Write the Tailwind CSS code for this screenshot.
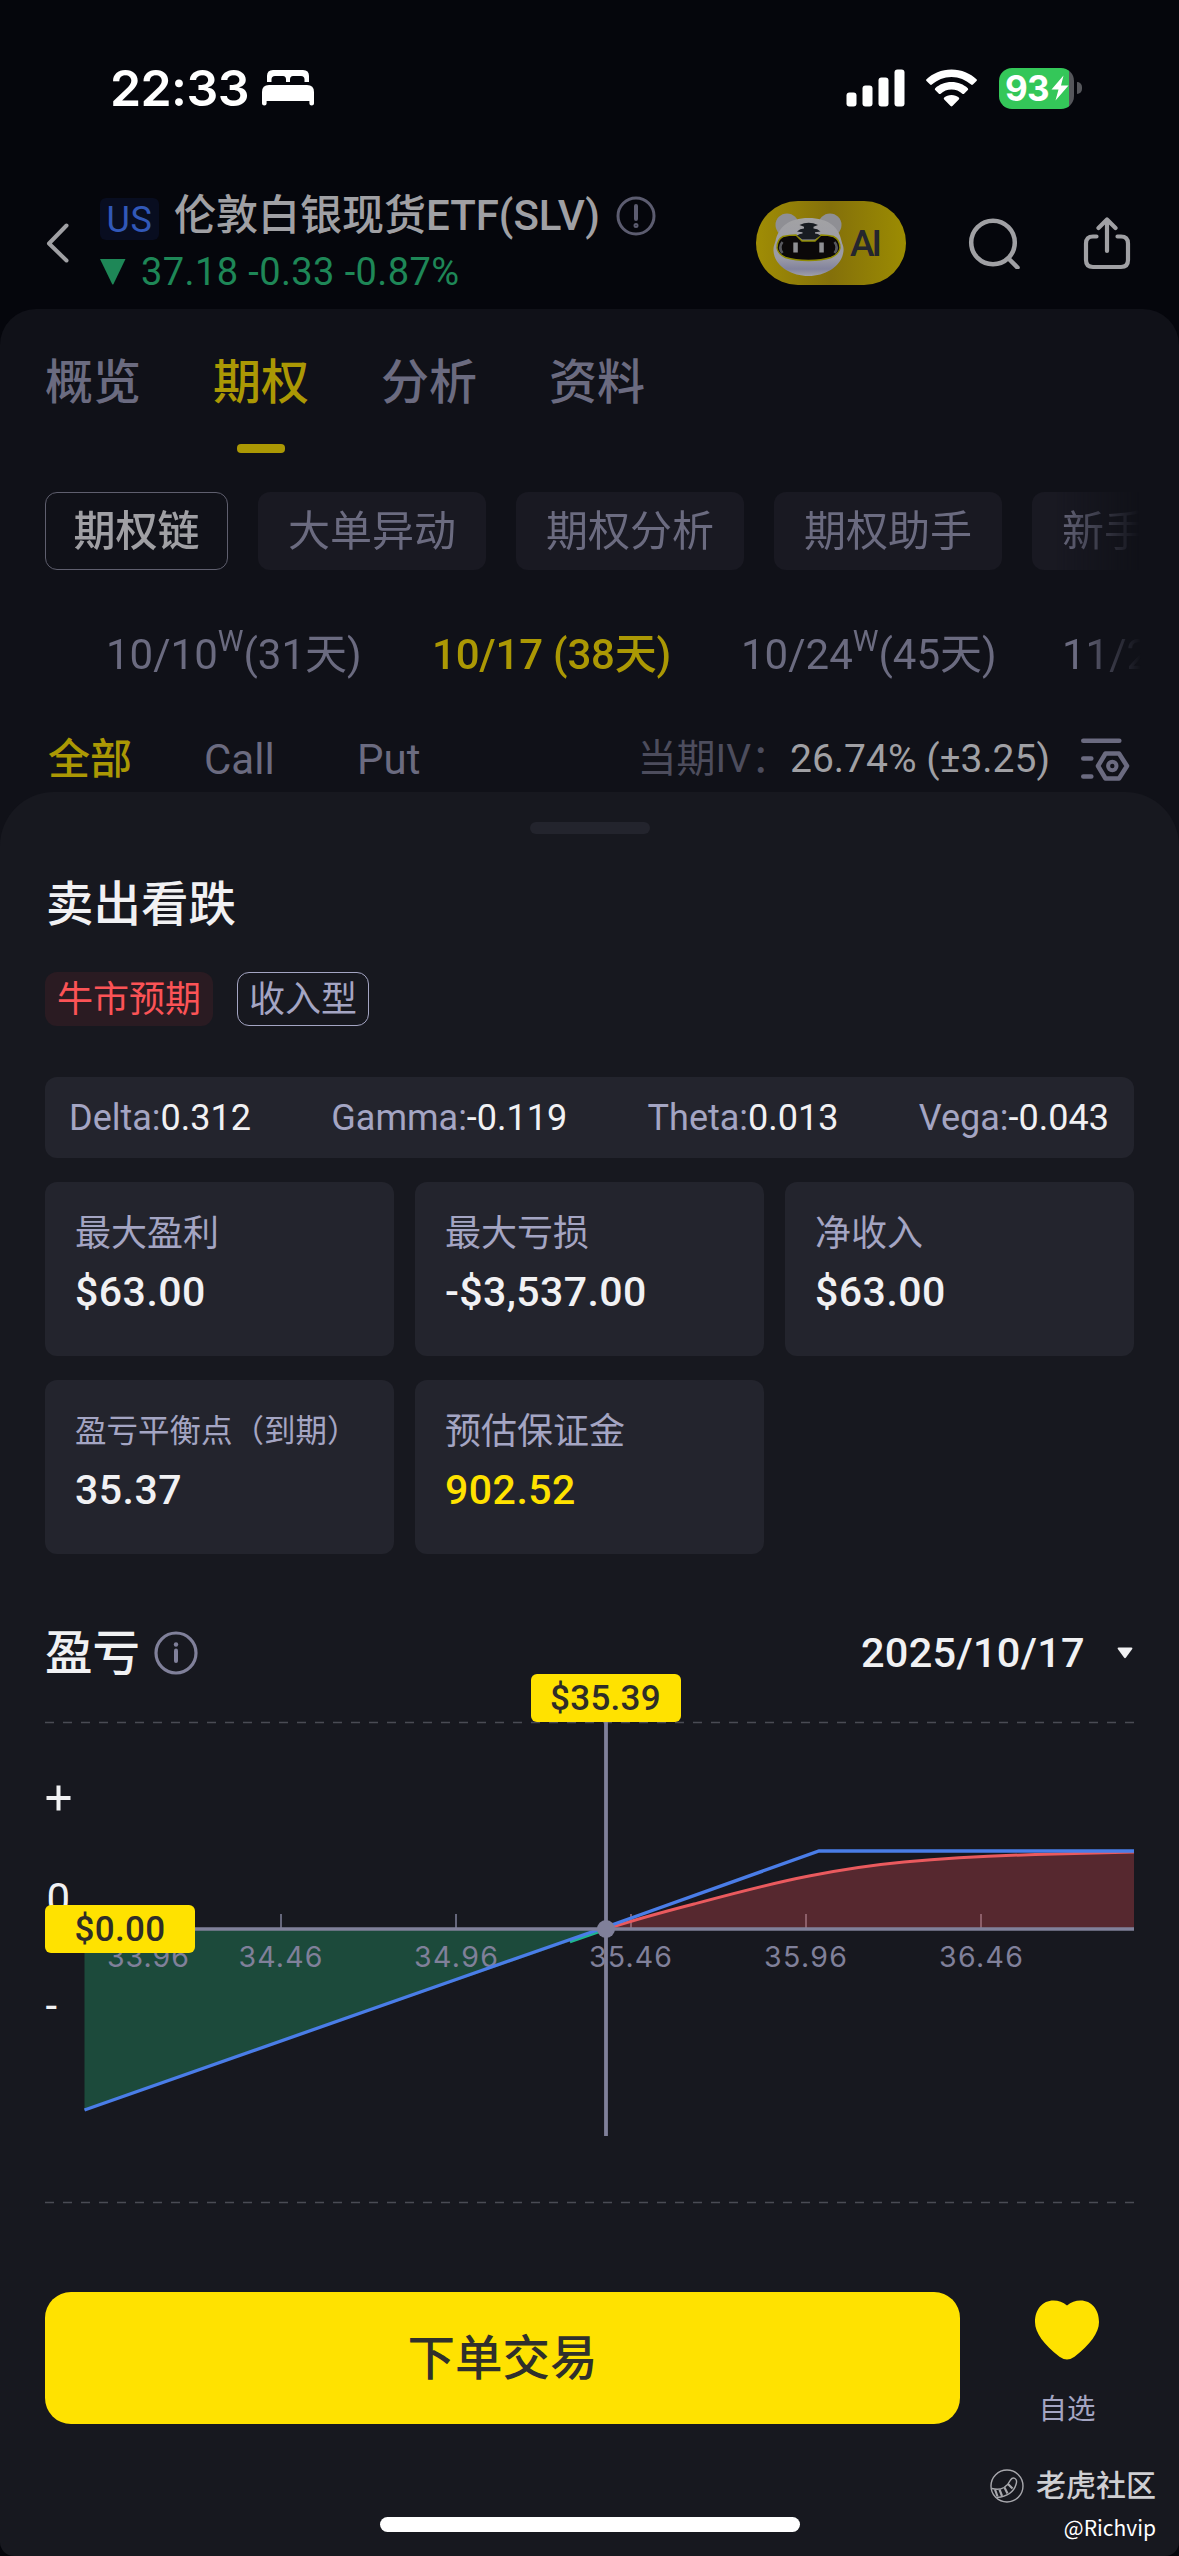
<!DOCTYPE html>
<html lang="zh-CN">
<head>
<meta charset="utf-8">
<title>SLV 期权</title>
<script src="https://cdn.jsdelivr.net/npm/@tailwindcss/browser@4"></script>
</head>
<body class="bg-[#05060c]">
<div class="relative w-[1179px] h-[2556px] overflow-hidden bg-[#05060c] font-[Roboto,'Noto_Sans_CJK_SC',sans-serif] whitespace-nowrap">

  <!-- Status bar -->
  <div class="flex h-[176px] items-center justify-between pl-[110px] pr-[97px]">
    <div class="flex items-center gap-[13px]">
      <span class="font-[Inter,sans-serif] text-[50px] leading-[60px] font-semibold text-white tracking-[-0.6px]">22:33</span>
      <svg class="w-[52px] h-[36px]" viewBox="0 0 52 36" fill="#fff"><path d="M5 12V6q0-6 6-6h30q6 0 6 6v6h-4.500V9.500Q42.500 6 39 6h-8q-3 0-3 3.500V12h-4V9.500Q24 6 21 6h-8q-3.500 0-3.500 3.500V12z"/><path d="M0 22q0-7 7-7h38q7 0 7 7v11.500q0 2-2.300 2T47.400 33.500V31H4.600v2.500q0 2-2.300 2T0 33.500z"/></svg>
    </div>
    <div class="flex items-center">
      <svg class="w-[59px] h-[38px]" viewBox="0 0 59 38" fill="#fff"><rect x="0.500" y="23.500" width="10" height="14" rx="3"/><rect x="16.500" y="16.500" width="10" height="21" rx="3"/><rect x="32.500" y="8.500" width="10" height="29" rx="3"/><rect x="48.500" y="0.500" width="10" height="37" rx="3"/></svg>
      <svg class="ml-[21px] w-[51px] h-[38px]" viewBox="0 0 51 38" fill="#fff"><path d="M25.500 .5C35.500 .5 44.500 4.500 50.500 10.200q.9 .9 0 1.800l-3.600 3.600q-.9 .9-1.800 0C39.800 10.900 33 8 25.500 8S11.200 10.900 5.900 15.600q-.9 .9-1.800 0L.5 12q-.9-.9 0-1.800C6.500 4.500 15.500 .5 25.500 .5z"/><path d="M25.500 13c6.500 0 12.200 2.400 16.300 6.200q.9 .9 0 1.800l-3.700 3.700q-.9 .8-1.800 0C33.500 22.100 29.700 20.500 25.500 20.500S17.500 22.100 14.700 24.700q-.9 .8-1.800 0L9.200 21q-.9-.9 0-1.800C13.300 15.400 19 13 25.500 13z"/><path d="M25.500 26c2.900 0 5.400 1 7.300 2.600q1 .9 0 1.900l-6.400 6.500q-.9 .9-1.800 0l-6.400-6.500q-1-1 0-1.900C20.100 27 22.600 26 25.500 26z"/></svg>
      <div class="ml-[22px] flex h-[41px] w-[75px] items-center rounded-[13px] bg-[linear-gradient(to_right,#34c759_70px,#55565b_70px)] pl-[6px] text-white">
        <span class="w-[46px] font-[Inter,sans-serif] text-[35px] leading-[41px] font-bold tracking-[-0.8px]">93</span>
        <svg class="w-[18px] h-[26px] shrink-0" viewBox="0 0 18 26" fill="#fff"><path d="M12.500 .5L.5 14.500h7L4.500 25.500 17.500 10.500h-7.500z"/></svg>
      </div>
      <div class="ml-[3px] h-[12px] w-[5px] rounded-r-full bg-[#55565b]"></div>
    </div>
  </div>

  <!-- Quote header -->
  <div class="flex h-[133px] items-center">
    <svg class="ml-[45px] w-[26px] h-[42px]" viewBox="0 0 26 42" fill="none" stroke="#a0a0a4" stroke-width="4" stroke-linecap="round" stroke-linejoin="round"><path d="M21.500 3.500L4 21.500l17.500 17"/></svg>
    <div class="ml-[29px] w-[656px] pt-[3px]">
      <div class="flex h-[56px] items-center">
        <span class="mt-[5px] flex h-[42px] w-[59px] items-center justify-center rounded-[6px] bg-[#080d20] pt-[2px] text-[36px] tracking-[0.6px] text-[#3158b8]">US</span>
        <span class="ml-[15px] text-[42px] font-medium leading-[56px] text-[#a0a0a4]">伦敦白银现货ETF(SLV)</span>
        <svg class="ml-[16px] w-[40px] h-[40px]" viewBox="0 0 40 40" fill="none" stroke="#5c5c70" stroke-width="3"><circle cx="20" cy="20" r="18"/><path d="M20 10v13" stroke-width="4" stroke-linecap="round"/><circle cx="20" cy="29.500" r="1" /></svg>
      </div>
      <div class="flex h-[56px] items-center">
        <svg class="w-[26px] h-[26px]" viewBox="0 0 26 26" fill="#1e8757"><path d="M0 0h25.500L13.500 25q-.7 1.200-1.400 0z"/></svg>
        <span class="ml-[15px] text-[38px] leading-[56px] tracking-[0.4px] text-[#1e8757]">37.18 -0.33 -0.87%</span>
      </div>
    </div>
    <svg class="w-[150px] h-[84px]" viewBox="0 0 150 84">
      <defs>
        <linearGradient id="pill" x1="0" x2="1"><stop offset="0" stop-color="#a08d05"/><stop offset=".5" stop-color="#84700a"/><stop offset="1" stop-color="#9c8c02"/></linearGradient>
        <linearGradient id="face" x1="0" x2="0" y1="0" y2="1"><stop offset="0" stop-color="#a2a2a4"/><stop offset=".7" stop-color="#9a9aa6"/><stop offset=".88" stop-color="#82839d"/><stop offset="1" stop-color="#a0a0a8"/></linearGradient>
      </defs>
      <rect width="150" height="84" rx="42" fill="url(#pill)"/>
      <circle cx="31" cy="24" r="11.500" fill="#8f8f94"/><circle cx="74" cy="24" r="11.500" fill="#8f8f94"/>
      <path d="M52.500 17C72 17 83 26 85.500 40c.8 4 2.500 5 2 10C86 65 70 75 52.500 75S18.500 65 17.500 50c-.3-5 1-6 2-10C22.500 26 33 17 52.500 17z" fill="url(#face)"/>
      <path d="M27 35.500Q33 34 40 34l6 6h13l6-6q7 0 12.500 1.500Q84 38.500 84 47 83 53 75 56.500 66 59.500 52.500 59.500T29.500 56.500Q22 53 21 47 21 38.500 27 35.500z" fill="#0b0809" stroke="#8f8a00" stroke-width="1.400"/>
      <path d="M43.500 24q9-4.500 18.500 0l-4.500 1.800v1.600q4 .2 7 3l-5.500 .8v1.400q3 .2 5.500 1.800L59 38.600H46.200L41 34.400q3-1.600 5.500-1.800v-1.400l-5.500-.8q3-2.800 7-3v-1.600z" fill="#181c22"/>
      <path d="M26.500 41q-4.500 5.500 0 11M78.500 41q4.500 5.500 0 11" stroke="#58585e" stroke-width="2.600" fill="none"/>
      <path d="M37.300 41.500h4.500v10h-4.500zM63.300 41.500h4.500v10h-4.500z" fill="#8f8f93"/>
      <text x="94" y="55.300" font-size="37" font-weight="500" fill="#25262e" textLength="32">AI</text>
    </svg>
    <svg class="ml-[62px] w-[53px] h-[53px]" viewBox="0 0 53 53" fill="none" stroke="#a0a0a4" stroke-width="4.500" stroke-linecap="round"><circle cx="25" cy="26.500" r="21.800"/><path d="M41 43l8.500 8.500"/></svg>
    <svg class="ml-[61px] w-[50px] h-[54px]" viewBox="0 0 50 54" fill="none" stroke="#a0a0a4" stroke-width="4.200" stroke-linecap="round" stroke-linejoin="round"><path d="M14.500 20.500H11q-7 0-7 7V44q0 7 7 7h28q7 0 7-7V27.500q0-7-7-7h-3.500M25 35V4M16.500 12L25 3.500l8.500 8.500"/></svg>
  </div>

  <!-- Option chain panel -->
  <div class="h-[600px] rounded-t-[36px] bg-[#101118]">
    <div class="flex h-[148px] items-center gap-[72px] pl-[45px] text-[48px] font-medium text-[#6b6b80]">
      <span>概览</span>
      <span class="relative flex h-full items-center text-[#ab9804]">期权<i class="absolute bottom-[4px] left-[24px] h-[9px] w-[48px] rounded-[4px] bg-[#ab9804]"></i></span>
      <span>分析</span>
      <span>资料</span>
    </div>
    <div class="mt-[35px] ml-[45px] flex w-[1100px] gap-[30px] overflow-hidden text-[42px] leading-[80px] text-[#6b6b80] [mask-image:linear-gradient(to_right,black_1010px,transparent_1094px)]">
      <span class="h-[78px] w-[183px] shrink-0 rounded-[12px] border-[1.5px] border-[#5f5f6e] text-center font-medium leading-[78px] text-[#a0a0a4]">期权链</span>
      <span class="h-[78px] w-[228px] shrink-0 rounded-[12px] bg-[#191922] text-center">大单异动</span>
      <span class="h-[78px] w-[228px] shrink-0 rounded-[12px] bg-[#191922] text-center">期权分析</span>
      <span class="h-[78px] w-[228px] shrink-0 rounded-[12px] bg-[#191922] text-center">期权助手</span>
      <span class="h-[78px] w-[228px] shrink-0 rounded-[12px] bg-[#191922] pl-[30px]">新手</span>
    </div>
    <div class="-mt-[2px] ml-[106px] flex h-[171px] w-[1040px] items-center overflow-hidden pt-[2px] text-[42px] text-[#6b6b80] [mask-image:linear-gradient(to_right,black_970px,transparent_1035px)]">
      <span class="w-[326px] shrink-0">10/10<span class="relative bottom-[18px] text-[29px]">W</span>(31天)</span>
      <span class="w-[309px] shrink-0 font-medium tracking-[-0.2px] text-[#ab9804]">10/17 (38天)</span>
      <span class="w-[321px] shrink-0">10/24<span class="relative bottom-[18px] text-[29px]">W</span>(45天)</span>
      <span class="shrink-0">11/2</span>
    </div>
    <div class="flex h-[41px] items-center pl-[48px] pr-[49px] text-[42px] leading-[41px] text-[#6b6b80]">
      <span class="w-[156px] font-medium text-[#ab9804]">全部</span>
      <span class="w-[153px]">Call</span>
      <span>Put</span>
      <div class="ml-auto flex items-center text-[39px]">
        <span class="text-[#4d4d5d]">当期IV：</span>
        <span class="text-[39px] text-[#a0a0a4]">26.74% (±3.25)</span>
        <svg class="ml-[30px] w-[50px] h-[44px]" viewBox="0 0 50 44" fill="none" stroke="#6b6b80" stroke-width="4.600" stroke-linecap="round" stroke-linejoin="round"><path d="M3.300 2.800h36M3.300 20.500h8M3.300 38.500h8M25.500 15.500h13.500l8 12.500-8 12.500H25.500l-7.500-12.500z"/><circle cx="32.300" cy="28" r="4.200" stroke-width="4"/></svg>
      </div>
    </div>
  </div>

  <!-- Strategy sheet -->
  <div class="absolute inset-x-0 top-[792px] bottom-0 rounded-t-[54px] rounded-b-[14px] bg-[#17181f] pt-[30px]">
    <div class="mx-auto h-[12px] w-[120px] rounded-full bg-[#23242d]"></div>
    <h1 class="flex h-[138px] items-center pl-[46px] pt-[5px] text-[47.500px] font-medium text-[#f1f1f3]">卖出看跌</h1>
    <div class="flex gap-[24px] pl-[45px] text-[36px] leading-[56px]">
      <span class="h-[54px] w-[168px] rounded-[12px] bg-[#2a1b22] text-center text-[#fb5356]">牛市预期</span>
      <span class="h-[54px] w-[132px] rounded-[12px] border-[1.5px] border-[#a4a5c3] text-center leading-[54px] text-[#a4a5c3]">收入型</span>
    </div>

    <div class="mx-[45px] mt-[51px] flex h-[81px] items-center justify-between rounded-[12px] bg-[#23242d] pl-[24px] pr-[25px] text-[36px] text-[#f1f1f3]">
      <span><span class="text-[#a4a5c3]">Delta:</span>0.312</span>
      <span><span class="text-[#a4a5c3]">Gamma:</span>-0.119</span>
      <span><span class="text-[#a4a5c3]">Theta:</span>0.013</span>
      <span><span class="text-[#a4a5c3]">Vega:</span>-0.043</span>
    </div>

    <div class="mx-[45px] mt-[24px] grid grid-cols-3 gap-x-[21px] gap-y-[24px] text-[#f1f1f3]">
      <div class="h-[174px] rounded-[12px] bg-[#23242d] pl-[30px] pt-[22px]"><p class="text-[36px] leading-[60px] text-[#a4a5c3]">最大盈利</p><p class="text-[41px] font-medium leading-[57px] tracking-[0.5px]">$63.00</p></div>
      <div class="h-[174px] rounded-[12px] bg-[#23242d] pl-[30px] pt-[22px]"><p class="text-[36px] leading-[60px] text-[#a4a5c3]">最大亏损</p><p class="text-[41px] font-medium leading-[57px] tracking-[0.4px]">-$3,537.00</p></div>
      <div class="h-[174px] rounded-[12px] bg-[#23242d] pl-[30px] pt-[22px]"><p class="text-[36px] leading-[60px] text-[#a4a5c3]">净收入</p><p class="text-[41px] font-medium leading-[57px] tracking-[0.5px]">$63.00</p></div>
      <div class="h-[174px] rounded-[12px] bg-[#23242d] pl-[30px] pt-[22px]"><p class="text-[31.500px] leading-[60px] text-[#a4a5c3]">盈亏平衡点（到期）</p><p class="text-[41px] font-medium leading-[57px] tracking-[0.5px]">35.37</p></div>
      <div class="h-[174px] rounded-[12px] bg-[#23242d] pl-[30px] pt-[22px]"><p class="text-[36px] leading-[60px] text-[#a4a5c3]">预估保证金</p><p class="text-[41px] font-medium leading-[57px] tracking-[0.5px] text-[#ffe200]">902.52</p></div>
    </div>

    <div class="mt-[66px] flex h-[66px] items-center pl-[45px] pr-[46px] text-[#f1f1f3]">
      <span class="pt-[4px] text-[47.500px] font-medium">盈亏</span>
      <svg class="ml-[14px] w-[44px] h-[44px]" viewBox="0 0 44 44" fill="none" stroke="#80809a" stroke-width="3.200"><circle cx="22" cy="22" r="20"/><path d="M22 19.500v10.500" stroke-width="4" stroke-linecap="round"/><circle cx="22" cy="13.500" r="2.200" fill="#80809a" stroke="none"/></svg>
      <span class="ml-auto text-[41.500px] font-medium leading-[60px] tracking-[0.3px]">2025/10/17</span>
      <svg class="ml-[32px] w-[16px] h-[12px]" viewBox="0 0 16 12" fill="#f1f1f3"><path d="M1.500 .5h13q1.500 0 .7 1.600L9 10.600q-1 1.200-2 0L.8 2.100Q0 .5 1.500 .5z"/></svg>
    </div>

    <!-- Profit / loss chart -->
    <div class="relative h-[524px]">
      <svg class="block w-[1179px] h-[524px]" viewBox="0 1686 1179 524">
        <path d="M45 1722.500H1134M45 2202.500H1134" stroke="#4a4b54" stroke-width="1.300" stroke-dasharray="9 9" fill="none"/>
        <g font-size="42" fill="#f1f1f3"><path d="M46.500 1798h24M58.500 1785.500v25" stroke="#f1f1f3" stroke-width="4" fill="none"/><text x="46.500" y="1913">0</text><text x="45.500" y="2019.500">-</text></g>
        <path d="M84.500 1929V2110L606 1929z" fill="#1c4a3b"/>
        <path d="M606 1929C640 1918 665 1911.500 694 1904C735 1893 770 1883.500 809 1876C842 1869.500 872 1865 904 1862C955 1857.500 990 1855.500 1055 1854L1134 1852V1929z" fill="#56282f"/>
        <path d="M281 1914v15M456 1914v15" stroke="#80809a" stroke-width="1.500"/>
        <path d="M631 1914v15M806 1914v15M981 1914v15" stroke="#a0707e" stroke-width="1.500"/>
        <g font-family="Inter, sans-serif" font-size="28.500" fill="#80809a">
          <text x="107" y="1967" textLength="82">33.96</text><text x="238.500" y="1967" textLength="84">34.46</text><text x="414" y="1967" textLength="84">34.96</text><text x="589" y="1967" textLength="83">35.46</text><text x="764" y="1967" textLength="83">35.96</text><text x="939" y="1967" textLength="84">36.46</text>
        </g>
        <path d="M570 1942L606 1929.500" stroke="#1fb58f" stroke-width="2.500"/>
        <path d="M606 1929C640 1918 665 1911.500 694 1904C735 1893 770 1883.500 809 1876C842 1869.500 872 1865 904 1862C955 1857.500 990 1855.500 1055 1854L1134 1852" stroke="#ea5a5e" stroke-width="3" fill="none"/>
        <path d="M84.500 2110L456 1979.500L606 1927L819 1851H1134" stroke="#4a7de8" stroke-width="3.300" fill="none"/>
        <path d="M84 1929H1134" stroke="#80809a" stroke-width="3.500"/>
        <path d="M606 1722V2136" stroke="#80809a" stroke-width="3.800"/>
        <circle cx="606" cy="1929" r="9" fill="#80809a"/>
      </svg>
      <span class="absolute left-[531px] top-[-12px] h-[48px] w-[150px] rounded-[6px] bg-[#ffe200] pr-[1px] text-center text-[35px] font-medium leading-[49px] tracking-[0.3px] text-[#2f2d28]">$35.39</span>
      <span class="absolute left-[45px] top-[219px] h-[48px] w-[150px] rounded-[6px] bg-[#ffe200] text-center text-[35px] font-medium leading-[49px] tracking-[0.3px] text-[#2f2d28]">$0.00</span>
    </div>

    <!-- Actions -->
    <div class="mt-[82px] flex h-[132px] pl-[45px]">
      <button class="h-[132px] w-[915px] rounded-[26px] bg-[#ffe200] pt-[3px] text-[47.500px] font-medium text-[#30302c]">下单交易</button>
      <div class="flex w-[214px] flex-col items-center pt-[8px]">
        <svg class="w-[66px] h-[60px] shrink-0" viewBox="0 0 66 60" fill="#ffe200"><path d="M33 5.500C37 2 41.500 .5 46.500 .5C57.500 .5 65 9.500 65 22C65 33 56 44.500 40.500 56.800Q33 62.300 25.500 56.800C10 44.500 1 33 1 22C1 9.500 8.500 .5 19.500 .5C24.500 .5 29 2 33 5.500z"/></svg>
        <span class="mt-[30px] text-[28.500px] leading-[40px] text-[#a4a5c3]">自选</span>
      </div>
    </div>
    <div class="mx-auto mt-[93px] h-[15px] w-[420px] rounded-full bg-white"></div>
  </div>

  <!-- Community watermark -->
  <div class="absolute right-[23px] bottom-[12px] flex flex-col items-end">
    <div class="mb-[3px] flex h-[43px] items-center gap-[12px]">
      <svg class="w-[34px] h-[34px]" viewBox="0 0 34 34" fill="none" stroke="#a8a8ad" stroke-width="1.400"><circle cx="17" cy="17" r="16"/><path d="M1.800 19.500Q9 21.500 14 18.500Q18.500 15.500 20.500 11Q22.500 8 25 9.500Q27.500 11 26 15.500Q22.500 27 7 28.500"/><path d="M5 20.500l2.500 7M9.500 20.500l2.500 6.500M14.500 18.500l3 6M18 15l4.500 4.500" stroke-width="2.200"/></svg>
      <span class="text-[30px] font-medium text-[#cfcfd3]">老虎社区</span>
    </div>
    <span class="font-['Noto_Sans_CJK_SC',sans-serif] text-[21px] leading-[34px] text-white">@Richvip</span>
  </div>
</div>
</body>
</html>
